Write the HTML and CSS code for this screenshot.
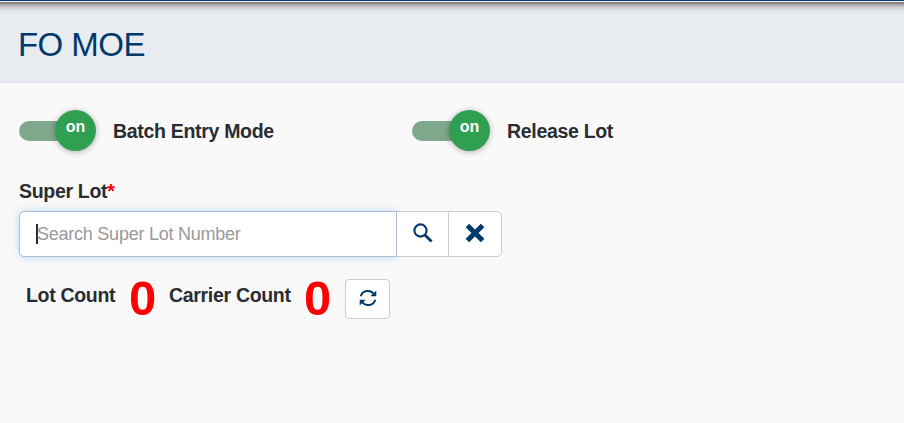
FILE: index.html
```html
<!DOCTYPE html>
<html lang="en">
<head>
<meta charset="utf-8">
<title>FO MOE</title>
<link rel="stylesheet" href="styles.css">
</head>
<body>
<div class="topbar"></div>
<header class="page-header"><h1>FO MOE</h1></header>
<main>
  <div class="toggles">
    <div class="toggle"><span class="switch"><span class="knob">on</span></span><span class="toggle-label">Batch Entry Mode</span></div>
    <div class="toggle"><span class="switch"><span class="knob">on</span></span><span class="toggle-label">Release Lot</span></div>
  </div>
  <label class="field-label">Super Lot<span class="required">*</span></label>
  <div class="search-group">
    <div class="search-input"><span class="caret"></span><span class="placeholder">Search Super Lot Number</span></div>
    <button class="addon find" aria-label="Search">
      <svg width="20" height="20" viewBox="0 0 20 20"><circle cx="7.5" cy="7.5" r="6.1" fill="none" stroke="#003a6c" stroke-width="2.1"/><path d="M11.9 11.9L18.6 18.4" stroke="#003a6c" stroke-width="2.8"/></svg>
    </button>
    <button class="addon clear" aria-label="Clear">
      <svg width="20" height="20" viewBox="0 0 20 20"><path d="M2.4 2.4L17.6 17.6M17.6 2.4L2.4 17.6" stroke="#003a6c" stroke-width="5"/></svg>
    </button>
  </div>
  <div class="counts">
    <span class="count-label lot">Lot Count</span><span class="count">0</span>
    <span class="count-label carrier">Carrier Count</span><span class="count">0</span>
    <button class="refresh" aria-label="Refresh">
      <svg width="18" height="18" viewBox="0 0 18 18"><g fill="none" stroke="#003a6c" stroke-width="2"><path d="M1.8 7.3A7.2 6.8 0 0 1 14.8 5"/><path d="M16.2 10.7A7.2 6.8 0 0 1 3.2 13"/></g><path d="M17.3 1.6V7.2H11.3ZM.7 16.4V10.8H6.7Z" fill="#003a6c"/></svg>
    </button>
  </div>
</main>
</body>
</html>
```

FILE: styles.css
```css
* { box-sizing: border-box; }
body { margin: 0; height: 423px; overflow: hidden; background: #f9f9f9; color: #292d32; font-family: "Liberation Sans", Arial, sans-serif; }
.topbar { height: 2px; background: #f0f2f6; border-top: 1px solid #003a6c; }
.page-header { height: 81px; padding: 24px 0 0 18px; border-bottom: 1px solid #d9dde9; background: linear-gradient(#756f74 0, #8a868b 1px, #aaa8ad 3px, #c8cad0 5px, #dee1e6 8px, #e8ebf0 12px); }
h1 { margin: 0; font-size: 33px; line-height: 38px; font-weight: 400; color: #003a6c; letter-spacing: -.55px; }
main { padding: 27px 19px 0; }
.toggles { display: flex; height: 41px; }
.toggle { display: flex; align-items: center; width: 393px; }
.toggle + .toggle .switch { width: 78px; }
.switch { display: flex; align-items: center; justify-content: flex-end; width: 77px; height: 20px; border-radius: 10px; background: linear-gradient(#80a88c, #80a88c) left / 60px 20px no-repeat; }
.knob { flex: none; width: 41px; height: 41px; border-radius: 50%; background: #319f52; color: #fff; font-size: 16px; font-weight: 700; line-height: 34px; text-align: center; box-shadow: 0 1px 6px rgba(0,0,0,.3); }
.toggle-label, .field-label, .count-label { font-size: 19.5px; font-weight: 700; line-height: 22px; letter-spacing: -.31px; white-space: nowrap; }
.toggle-label { margin-left: 17px; }
.field-label { display: block; margin-top: 29px; }
.required { color: #f00; }
.search-group { display: flex; margin-top: 9px; height: 46px; width: 483px; }
.search-input { display: flex; align-items: center; width: 378px; padding-left: 16px; background: #fff; border: 1px solid #a4bfda; border-radius: 5px 0 0 5px; box-shadow: 0 0 8px rgba(102,175,233,.4); font-size: 18px; letter-spacing: -.24px; color: #999; }
.caret { width: 2px; height: 20px; background: #292d32; margin-right: -1px; }
button { display: flex; align-items: center; justify-content: center; padding: 0; background: #fff; border: 1px solid #ccc; }
.addon { border-left: 0; }
.addon svg { margin-top: -2px; }
.find { width: 52px; }
.clear { width: 53px; border-radius: 0 5px 5px 0; }
.counts { display: flex; margin-top: 22px; height: 40px; }
.count-label { margin-top: 5px; }
.lot { margin-left: 7px; width: 103px; }
.carrier { width: 135px; }
.count { width: 40px; color: #f00; font-size: 49px; line-height: 38px; font-weight: 700; letter-spacing: -1px; }
.refresh { width: 45px; height: 40px; border-radius: 4px; margin-left: 1px; padding-bottom: 2px; }
```
